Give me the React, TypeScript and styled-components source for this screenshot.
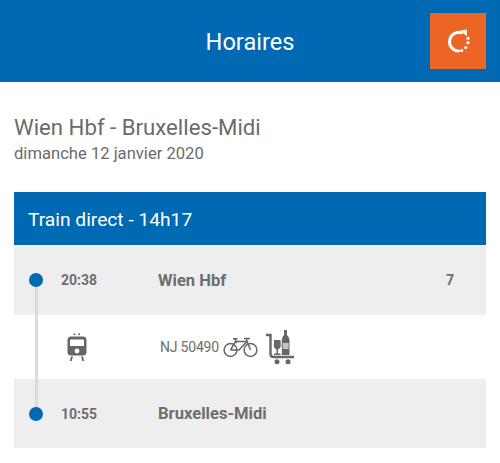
import React from 'react';
import styled, { createGlobalStyle } from 'styled-components';

const GlobalStyle = createGlobalStyle`
  html, body {
    margin: 0;
    padding: 0;
    background: #fff;
    font-family: Roboto, "Liberation Sans", sans-serif;
  }
`;

type Stop = {
  time: string;
  station: string;
  platform?: string;
};

const departure: Stop = { time: '20:38', station: 'Wien Hbf', platform: '7' };
const arrival: Stop = { time: '10:55', station: 'Bruxelles-Midi' };

const RefreshIcon = () => (
  <svg width="24" height="24" viewBox="0 0 24 24" fill="none">
    <path
      d="M15.5 3.8A9.3 9.3 0 1 0 12.5 22"
      stroke="#fff"
      strokeWidth="3"
      strokeLinecap="round"
    />
    <path d="M14.5 1.5 L20.8 0.5 L20.8 7.2 Z" fill="#fff" />
    <circle cx="22" cy="9.3" r="1.6" fill="#fff" />
    <circle cx="22" cy="13.7" r="1.6" fill="#fff" />
    <circle cx="19.7" cy="18.5" r="1.6" fill="#fff" />
    <circle cx="15.6" cy="21.5" r="1.6" fill="#fff" />
  </svg>
);

const TrainIcon = () => (
  <svg width="20" height="29" viewBox="0 0 20 29" fill="#666">
    <circle cx="7.5" cy="1.2" r="1" />
    <circle cx="12" cy="1.2" r="1" />
    <path d="M4 3.5h12a3.5 3.5 0 0 1 3.5 3.5v12a3.5 3.5 0 0 1-3.5 3.5H4A3.5 3.5 0 0 1 .5 19V7A3.5 3.5 0 0 1 4 3.5Z" />
    <rect x="3" y="6.5" width="14" height="6.5" rx="0.8" fill="#fff" />
    <circle cx="10" cy="18" r="2.4" fill="#fff" />
    <path d="M4 23.5h2L4.6 28H2.8ZM14 23.5h2l1.2 4.5h-1.8Z" />
  </svg>
);

const BikeIcon = () => (
  <svg width="35" height="22" viewBox="0 0 35 22" fill="none" stroke="#666" strokeWidth="1.5">
    <circle cx="7.5" cy="14" r="6.4" />
    <circle cx="27.5" cy="14" r="6.4" />
    <path d="M7.5 14 L12.5 5.5 H24 L16 14 H7.5 M24 5.5 L27.5 14 M23.5 2.5 L24 5.5 M21 2.5 H27 M12 2.8 L13.5 7 M10 2.8 H14.5" />
  </svg>
);

const TrolleyIcon = () => (
  <TrolleySvg width="30" height="37" viewBox="0 0 30 37" fill="#666">
    <path d="M1 7 H5.5 V26 Q5.5 29 8.5 29 H29" fill="none" stroke="#666" strokeWidth="2.4" />
    <circle cx="12" cy="33.8" r="2.5" />
    <circle cx="23" cy="33.8" r="2.5" />
    <path d="M9 12 H15.5 L15.8 18 Q15.5 21 13 21.4 V25.5 H15.5 V27 H9 V25.5 H11.5 V21.4 Q9 21 8.8 18 Z" />
    <path d="M19 2 H22 V7 Q24.5 9 24.5 12 V27 H16.8 V12 Q16.8 9 19 7 Z" />
    <rect x="17.8" y="15" width="5.8" height="6" fill="#c4c4c4" />
  </TrolleySvg>
);

const App: React.FC = () => (
  <Page>
    <GlobalStyle />
    <TopBar>
      <TopTitle>Horaires</TopTitle>
      <RefreshButton aria-label="Actualiser">
        <RefreshIcon />
      </RefreshButton>
    </TopBar>

    <Summary>
      <Route>Wien Hbf - Bruxelles-Midi</Route>
      <Day>dimanche 12 janvier 2020</Day>
    </Summary>

    <Journey>
      <JourneyHeader>Train direct - 14h17</JourneyHeader>
      <Timeline>
        <TimelineLine />
        <StopRow $height={70}>
          <Dot />
          <Time>{departure.time}</Time>
          <Station>{departure.station}</Station>
          <Platform>{departure.platform}</Platform>
        </StopRow>
        <TrainRow>
          <TrainIconCell>
            <TrainIcon />
          </TrainIconCell>
          <TrainNumber>NJ 50490</TrainNumber>
          <BikeIcon />
          <TrolleyIcon />
        </TrainRow>
        <StopRow $height={69}>
          <Dot />
          <Time>{arrival.time}</Time>
          <Station>{arrival.station}</Station>
        </StopRow>
      </Timeline>
    </Journey>
  </Page>
);

const Page = styled.div`
  width: 500px;
  height: 463px;
  overflow: hidden;
  background: #fff;
`;

const TopBar = styled.header`
  position: relative;
  height: 82px;
  display: flex;
  align-items: center;
  justify-content: center;
  background: #0069b4;
`;

const TopTitle = styled.h1`
  margin: 2px 0 0;
  font-size: 23.6px;
  font-weight: 400;
  color: #fff;
`;

const RefreshButton = styled.button`
  position: absolute;
  top: 13px;
  right: 14px;
  width: 56px;
  height: 56px;
  padding: 0;
  border: 0;
  display: flex;
  align-items: center;
  justify-content: center;
  background: #ec6525;
`;

const Summary = styled.div`
  padding: 30px 14px 0;
  height: 80px;
`;

const Route = styled.div`
  font-size: 22.2px;
  line-height: 30px;
  color: #6b6b6b;
`;

const Day = styled.div`
  margin-top: 1px;
  font-size: 16.6px;
  line-height: 22px;
  color: #6b6b6b;
`;

const Journey = styled.section`
  margin: 0 14px;
`;

const JourneyHeader = styled.div`
  height: 53px;
  padding: 1px 0 0 14px;
  box-sizing: border-box;
  display: flex;
  align-items: center;
  font-size: 19.2px;
  color: #fff;
  background: #0069b4;
`;

const Timeline = styled.div`
  position: relative;
`;

const TimelineLine = styled.div`
  position: absolute;
  left: 21px;
  top: 35px;
  width: 2.5px;
  height: 134px;
  background: #dcdcdc;
`;

const StopRow = styled.div<{ $height: number }>`
  height: ${(props) => props.$height}px;
  display: flex;
  align-items: center;
  background: #eee;
  color: #6e6e6e;
  font-weight: 700;
`;

const Dot = styled.span`
  position: relative;
  flex: none;
  width: 14px;
  height: 14px;
  margin-left: 15px;
  border-radius: 50%;
  background: #0069b4;
`;

const Time = styled.span`
  width: 97px;
  margin-left: 18px;
  font-size: 14px;
`;

const Station = styled.span`
  flex: 1;
  font-size: 16.6px;
`;

const Platform = styled.span`
  width: 40px;
  font-size: 14px;
`;

const TrainRow = styled.div`
  height: 64px;
  display: flex;
  align-items: center;
  color: #6e6e6e;
`;

const TrainIconCell = styled.span`
  display: flex;
  width: 146px;
  padding-left: 53px;
  box-sizing: border-box;
`;

const TrainNumber = styled.span`
  margin-right: 4px;
  font-size: 14px;
  letter-spacing: -0.2px;
`;

const TrolleySvg = styled.svg`
  margin: -2px 0 0 7px;
`;

export default App;
